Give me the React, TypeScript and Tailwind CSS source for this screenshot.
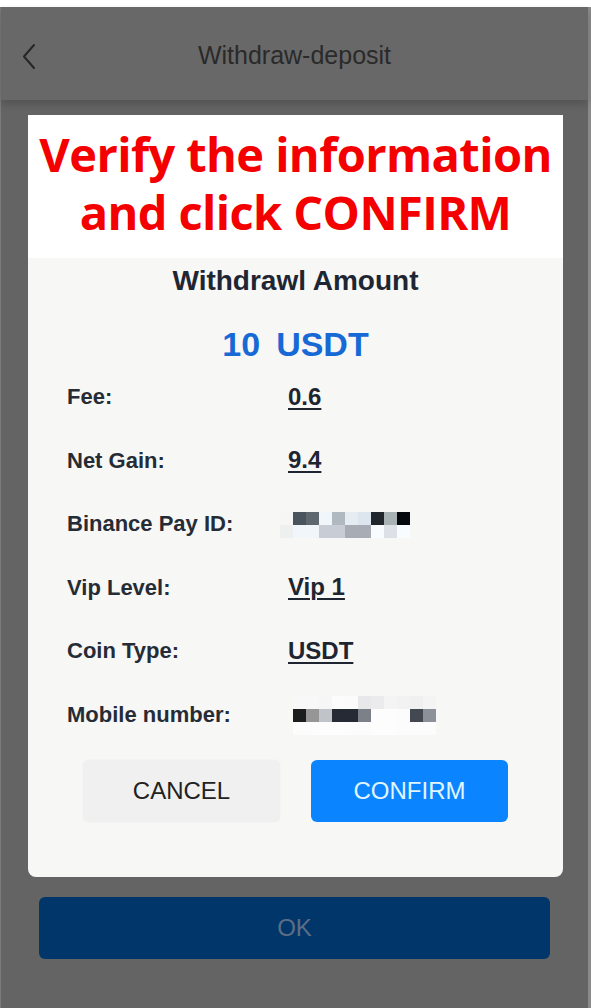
import React from "react";

const rows: { label: string; value?: string; mask?: string[][] }[] = [
  { label: "Fee:", value: "0.6" },
  { label: "Net Gain:", value: "9.4" },
  {
    label: "Binance Pay ID:",
    mask: [
      ["#f6f6f4", "#4a545c", "#5f686e", "#f0f6fa", "#b0b8c0", "#e5edf3", "#dde6ee", "#20262c", "#a8b2b4", "#05080c"],
      ["#eef0f0", "#f0f6fa", "#f0f6fa", "#c8ccd4", "#c8ccd4", "#a8acb4", "#a8acb4", "#f8fcfe", "#dde0e6", "#f8fcfe"],
    ],
  },
  { label: "Vip Level:", value: "Vip 1" },
  { label: "Coin Type:", value: "USDT" },
  {
    label: "Mobile number:",
    mask: [
      ["#f8f8f8", "#f8f8f8", "#f6f6f6", "#fcfcfc", "#fbfbfb", "#e8e8ea", "#ebebed", "#f4f4f4", "#f2f2f2", "#f0f0f0", "#f4f4f4"],
      ["#1c1e1e", "#969696", "#c0c4c8", "#252a35", "#252a35", "#7c8088", "#fdfdfd", "#fdfdfd", "#fcfcfc", "#444850", "#8c9098"],
      ["#fcfcfc", "#fcfcfc", "#fdfdfd", "#fdfdfd", "#fcfcfc", "#fcfcfc", "#fdfdfd", "#fdfdfd", "#fcfcfc", "#fcfcfc", "#fcfcfc"],
    ],
  },
];

const Mask = ({ grid }: { grid: string[][] }) => (
  <div className="flex flex-col">
    {grid.map((line, i) => (
      <div key={i} className="flex">
        {line.map((c, j) => (
          <div key={j} className="w-[13px] h-[13px]" style={{ backgroundColor: c }} />
        ))}
      </div>
    ))}
  </div>
);

export default function App() {
  return (
    <div className="w-[591px] h-[1008px] bg-white flex flex-col font-['Liberation_Sans',Arial,sans-serif] overflow-hidden">
      <div className="h-[7px] bg-white" />
      <div className="flex-1 flex flex-col bg-[#646464] border-l border-l-[#7a7a7a] border-r-[3px] border-r-[#8a8a8a]">
        {/* header */}
        <header className="relative h-[93px] bg-[#686868] flex items-center justify-center shadow-[0_4px_8px_rgba(0,0,0,0.18)]">
          <svg className="absolute left-[20px] top-[36px]" width="16" height="27" viewBox="0 0 16 27" fill="none">
            <polyline points="13,2 3,13.5 13,25" stroke="#262626" strokeWidth="2" strokeLinecap="round" strokeLinejoin="round" />
          </svg>
          <h1 className="text-[25px] text-[#2a2a2a] mt-[4px]">Withdraw-deposit</h1>
        </header>

        {/* modal */}
        <div className="ml-[27px] mr-[25px] mt-[15px] rounded-b-[8px] bg-[#f7f7f5] flex flex-col">
          <div className="bg-white pt-[10px] pb-[17px] text-center text-[#f40000] font-['Open_Sans',sans-serif] font-bold text-[47px] leading-[58px] tracking-[-0.6px]">
            <div>Verify the information</div>
            <div>and click CONFIRM</div>
          </div>

          <h2 className="mt-[7px] text-center text-[28px] leading-[32px] font-bold text-[#1f2633]">Withdrawl Amount</h2>
          <div className="mt-[27px] flex justify-center gap-[16px] text-[34px] leading-[40px] font-bold text-[#1769d6]">
            <span>10</span>
            <span>USDT</span>
          </div>

          <div className="mt-[1px] pl-[39px] flex flex-col">
            {rows.map((r) => (
              <div key={r.label} className="h-[63.5px] flex items-center">
                <span className="w-[221px] text-[22px] font-bold text-[#262c36]">{r.label}</span>
                {r.value ? (
                  <span className="text-[24px] font-bold text-[#1f2530] underline underline-offset-[3px] decoration-2">{r.value}</span>
                ) : (
                  <div className={r.mask!.length === 2 ? "-ml-[8px] mt-[2px]" : "ml-[5px] mt-[2px]"}>
                    <Mask grid={r.mask!} />
                  </div>
                )}
              </div>
            ))}
          </div>

          <div className="mt-[14px] px-[55px] flex justify-between">
            <button className="w-[197px] h-[62px] rounded-[6px] bg-[#f0f0f0] shadow-[0_0_2px_rgba(0,0,0,0.06)] text-[24px] text-[#222]">CANCEL</button>
            <button className="w-[197px] h-[62px] rounded-[6px] bg-[#0a84ff] text-[24px] text-[#e0f6ff]">CONFIRM</button>
          </div>
          <div className="h-[55px]" />
        </div>

        <button className="mx-[38px] mt-[20px] h-[62px] rounded-[6px] bg-[#01366b] text-[24px] text-[#5c6d84]">OK</button>
      </div>
    </div>
  );
}
